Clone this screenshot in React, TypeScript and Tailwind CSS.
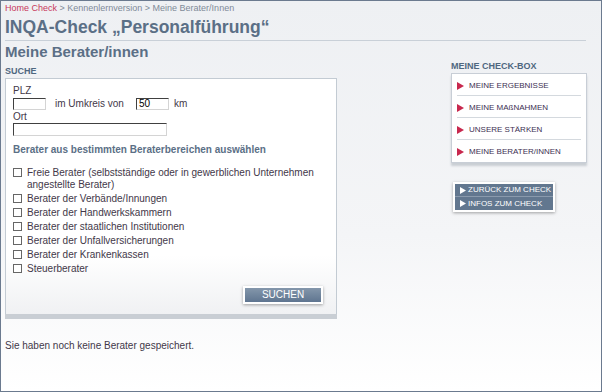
const categories = [
  "Berater der Verbände/Innungen",
  "Berater der Handwerkskammern",
  "Berater der staatlichen Institutionen",
  "Berater der Unfallversicherungen",
  "Berater der Krankenkassen",
  "Steuerberater",
];

const menu = ["MEINE ERGEBNISSE", "MEINE MAßNAHMEN", "UNSERE STÄRKEN", "MEINE BERATER/INNEN"];

function Box() {
  return <span className="mt-[1px] w-[9px] h-[9px] shrink-0 border border-[#666] bg-white" />;
}

function Field({ w, h, value }: { w: string; h: string; value?: string }) {
  return (
    <span
      className={`${w} ${h} block bg-white border border-t-[#404040] border-l-[#404040] border-b-[#d4d4d4] border-r-[#d4d4d4] text-[10px] leading-[10px] pl-[2px] text-black`}
    >
      {value}
    </span>
  );
}

export default function App() {
  return (
    <div className="w-[602px] h-[392px] overflow-hidden border border-[#6b7a8f] bg-gradient-to-b from-[#eef0f3] via-[#f4f5f7] via-60% to-white font-['Liberation_Sans',sans-serif] text-[10px] text-[#433849]">
      <div className="px-[4px] pt-[1px]">
        <div className="text-[9px] leading-[12px] text-[#7f8b99]">
          <span className="text-[#c8385c]">Home Check</span> &gt; Kennenlernversion &gt; Meine Berater/Innen
        </div>
        <h1 className="mt-[2px] text-[17.5px] leading-[22px] font-bold text-[#5b6f86]">INQA-Check „Personalführung“</h1>
        <div className="mt-[2px] mr-[11px] h-px bg-[#c9d0d8]" />
        <h2 className="mt-[2px] text-[15px] leading-[18px] font-bold text-[#5b6f86]">Meine Berater/innen</h2>

        <div className="flex">
          <div className="w-[332px] pt-[5px]">
            <div className="text-[9px] leading-[11px] font-bold text-[#4f6780]">SUCHE</div>
            <div className="mt-[1px] bg-gradient-to-b from-white via-white via-75% to-[#f0f1f3] border border-[#c3cbd3] border-b-0 shadow-[0_5px_0_#c9ced4] px-[7px] pt-[6px] pb-[10px]">
              <div className="leading-[11px]">PLZ</div>
              <div className="flex items-center">
                <Field w="w-[33px]" h="h-[12px]" />
                <span className="ml-[9px]">im Umkreis von</span>
                <span className="ml-[12px]">
                  <Field w="w-[33px]" h="h-[12px]" value="50" />
                </span>
                <span className="ml-[5px]">km</span>
              </div>
              <div className="leading-[12px]">Ort</div>
              <Field w="w-[154px]" h="h-[13px]" />

              <div className="mt-[7px] text-[10px] font-bold text-[#5b6f86] leading-[14px]">
                Berater aus bestimmten Beraterbereichen auswählen
              </div>

              <div className="mt-[10px] flex gap-[5px] leading-[12px]">
                <Box />
                <span>
                  Freie Berater (selbstständige oder in gewerblichen Unternehmen
                  <br />
                  angestellte Berater)
                </span>
              </div>
              {categories.map((c) => (
                <div key={c} className="mt-[2px] flex gap-[5px] leading-[12px]">
                  <Box />
                  <span>{c}</span>
                </div>
              ))}

              <div className="mt-[11px] flex justify-end pr-[6px]">
                <button className="p-[2px] bg-white shadow-[0_1px_3px_rgba(0,0,0,0.35)]">
                  <span className="block w-[76px] h-[14px] bg-gradient-to-b from-[#8497ab] to-[#5f7590] text-white text-[10px] leading-[14px] text-center">
                    SUCHEN
                  </span>
                </button>
              </div>
            </div>
            <div className="mt-[25px] leading-[13px]">Sie haben noch keine Berater gespeichert.</div>
          </div>

          <div className="ml-auto mr-[10px] w-[136px]">
            <div className="text-[9px] leading-[11px] font-bold text-[#4f6780]">MEINE CHECK-BOX</div>
            <div className="mt-[1px] bg-white border border-[#c8ced6] shadow-[0_3px_2px_#c9ced4] px-[5px]">
              {menu.map((m, i) => (
                <div
                  key={m}
                  className={`flex items-center gap-[5px] h-[22px] pt-[2px] ${i < menu.length - 1 ? "border-b border-[#d4d9de]" : ""}`}
                >
                  <svg width="7" height="8" viewBox="0 0 7 8" className="shrink-0">
                    <path d="M0 0 L7 4 L0 8 Z" fill="#c8284e" />
                  </svg>
                  <span className="text-[8px] text-[#3d2f52]">{m}</span>
                </div>
              ))}
            </div>

            <div className="mt-[19px] ml-[2px] w-[102px] p-[2px] bg-white shadow-[0_1px_3px_rgba(0,0,0,0.35)]">
              {["ZURÜCK ZUM CHECK", "INFOS ZUM CHECK"].map((t, i) => (
                <div
                  key={t}
                  className={`flex items-center gap-[2px] h-[13px] pl-[5px] bg-[#62778f] text-white text-[8px] ${i === 0 ? "border-b border-[#8a9aad]" : ""}`}
                >
                  <svg width="6" height="7" viewBox="0 0 6 7" className="shrink-0">
                    <path d="M0 0 L6 3.5 L0 7 Z" fill="#fff" />
                  </svg>
                  <span>{t}</span>
                </div>
              ))}
            </div>
          </div>
        </div>
      </div>
    </div>
  );
}
